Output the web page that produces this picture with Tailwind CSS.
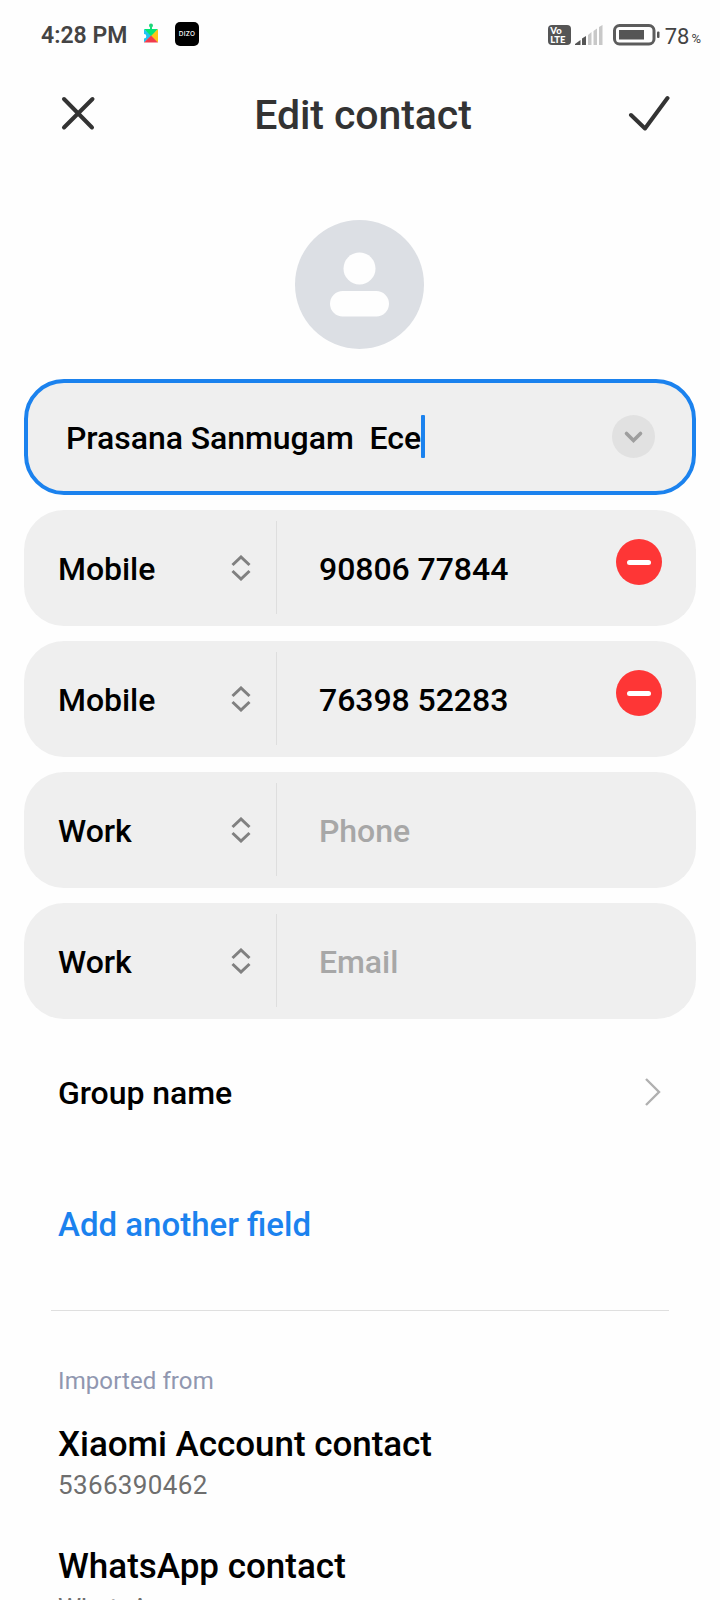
<!DOCTYPE html>
<html lang="en">
<head>
<meta charset="utf-8">
<title>Edit contact</title>
<script src="https://cdn.jsdelivr.net/npm/@tailwindcss/browser@4"></script>
</head>
<body class="bg-[#fefefe]">
<div class="w-[720px] h-[1600px] overflow-hidden flex flex-col font-['Roboto',sans-serif] text-black bg-[#fefefe]">

  <!-- Status bar -->
  <div class="h-[70px] shrink-0 flex items-center pl-[41px] pr-[19px] text-[#444]">
    <span class="text-[23px] leading-[30px] font-semibold w-[98px] whitespace-nowrap mt-[2px]">4:28 PM</span>
    <svg class="w-6 h-6 shrink-0 mb-[2px]" viewBox="0 0 24 24">
      <circle cx="12" cy="3.600" r="2" fill="#1fd67a"/><path d="M11 4h2v4h-2z" fill="#1fd67a"/>
      <path d="M5 7h14l-6 7h-2z" fill="#00e676"/>
      <path d="M5 7l7 7-7 6.500v-4a2.300 2.300 0 1 0 0-4.600z" fill="#22c3f3"/>
      <path d="M19 7v13.500l-7-6.500z" fill="#fdc516"/>
      <path d="M5 20.500h14l-7-7z" fill="#f03a4c"/>
    </svg>
    <div class="w-6 h-6 ml-3 mb-[2px] rounded-[5px] bg-black text-white flex items-center justify-center font-['Inter',sans-serif] text-[6.500px] leading-[8px] font-medium tracking-[0.300px]">DIZO</div>
    <div class="ml-auto flex items-center">
      <div class="w-[23px] h-5 rounded-[4px] bg-[#555] text-white font-['Lato',sans-serif] font-black text-[9.500px] leading-[9px] pl-[2.500px] pt-px">
        <div>Vo</div><div>LTE</div>
      </div>
      <svg class="w-7 h-5 ml-1" viewBox="0 0 28 20">
        <path d="M0 20v-1l5.500-4v5z" fill="#555"/><path d="M7 20v-6.500l4-2.500v9z" fill="#555"/>
        <path d="M13 20V10l3.500-3v13zM18.500 20V6L22 3.500V20zM24 20V2l3.500-2v20z" fill="#c8c8c8"/>
      </svg>
      <svg class="w-[47px] h-[22px] ml-[10px]" viewBox="0 0 47 22">
        <rect x="1.500" y="1.500" width="39.500" height="18.500" rx="5" fill="none" stroke="#5c5c5c" stroke-width="3"/>
        <rect x="6" y="6" width="25" height="9.500" fill="#555"/><rect x="44" y="7.500" width="2.500" height="6.500" rx="1" fill="#555"/>
      </svg>
      <span class="text-[22px] leading-[30px] ml-[5px] mt-[3px]">78</span><span class="text-[13px] mt-[7px] ml-[2px] font-[450]">%</span>
    </div>
  </div>

  <!-- Title bar -->
  <div class="h-[86px] shrink-0 flex items-center justify-between pl-[60px] pr-[50px] text-[#333]">
    <svg class="w-9 h-9" viewBox="0 0 36 36" fill="none" stroke="currentColor" stroke-width="4" stroke-linecap="round"><path d="M4 4l28 28.500M32.500 4L4 32.500"/></svg>
    <h1 class="text-[41px] leading-[50px] font-[480] whitespace-nowrap mt-[3px] ml-[2px] tracking-[-0.080px]">Edit contact</h1>
    <svg class="w-[42px] h-9" viewBox="0 0 42 36" fill="none" stroke="currentColor" stroke-width="4" stroke-linecap="round" stroke-linejoin="round"><path d="M3 20l14 13.500L39.500 3"/></svg>
  </div>

  <!-- Avatar -->
  <svg class="w-[129px] h-[129px] shrink-0 mt-16 ml-[295px]" viewBox="0 0 129 129">
    <circle cx="64.500" cy="64.500" r="64.500" fill="#dcdfe4"/>
    <circle cx="64.500" cy="48.500" r="16" fill="#fefefe"/><rect x="35" y="71" width="59" height="25.500" rx="12.750" fill="#fefefe"/>
  </svg>

  <!-- Fields -->
  <div class="mt-[30px] mx-6 flex flex-col gap-[15px] text-[32px] leading-[38px] font-[490] tracking-[-0.050px]">
    <div class="h-[116px] rounded-[40px] border-4 border-[#1b82ee] bg-[#efefef] flex items-center pl-[38px] pr-[37px]">
      <span class="whitespace-pre mt-px">Prasana Sanmugam  Ece</span>
      <span class="w-1 h-[43px] rounded-[1px] bg-[#1b82ee] mb-[2px]"></span>
      <svg class="w-[43px] h-[43px] ml-auto mb-[2px]" viewBox="0 0 43 43"><circle cx="21.500" cy="21.500" r="21.500" fill="#e1e1e1"/><path d="M14.500 18.500l7 7 7-7" fill="none" stroke="#9e9e9e" stroke-width="3.600" stroke-linecap="round"/></svg>
    </div>

    <div class="h-[116px] rounded-[40px] bg-[#efefef] flex items-center pl-[34px] pr-[34px]">
      <span class="w-[173px] mt-[2px]">Mobile</span>
      <svg class="w-[20px] h-[26px] mb-px" viewBox="0 0 20 26" fill="none" stroke="#808080" stroke-width="3"><path d="M1.500 10L10 2l8.500 8M1.500 16l8.500 8 8.500-8"/></svg>
      <span class="w-px h-[93px] bg-[#dedede] ml-[25px] mb-[2px]"></span>
      <span class="ml-[42px] mt-[2px]">90806 77844</span>
      <svg class="w-[46px] h-[46px] ml-auto mb-[12px]" viewBox="0 0 46 46"><circle cx="23" cy="23" r="23" fill="#fe3636"/><path d="M13.500 23.500h19" stroke="#fff" stroke-width="5" stroke-linecap="round"/></svg>
    </div>

    <div class="h-[116px] rounded-[40px] bg-[#efefef] flex items-center pl-[34px] pr-[34px]">
      <span class="w-[173px] mt-[2px]">Mobile</span>
      <svg class="w-[20px] h-[26px] mb-px" viewBox="0 0 20 26" fill="none" stroke="#808080" stroke-width="3"><path d="M1.500 10L10 2l8.500 8M1.500 16l8.500 8 8.500-8"/></svg>
      <span class="w-px h-[93px] bg-[#dedede] ml-[25px] mb-[2px]"></span>
      <span class="ml-[42px] mt-[2px]">76398 52283</span>
      <svg class="w-[46px] h-[46px] ml-auto mb-[12px]" viewBox="0 0 46 46"><circle cx="23" cy="23" r="23" fill="#fe3636"/><path d="M13.500 23.500h19" stroke="#fff" stroke-width="5" stroke-linecap="round"/></svg>
    </div>

    <div class="h-[116px] rounded-[40px] bg-[#efefef] flex items-center pl-[34px] pr-[34px]">
      <span class="w-[173px] mt-[2px]">Work</span>
      <svg class="w-[20px] h-[26px] mb-px" viewBox="0 0 20 26" fill="none" stroke="#808080" stroke-width="3"><path d="M1.500 10L10 2l8.500 8M1.500 16l8.500 8 8.500-8"/></svg>
      <span class="w-px h-[93px] bg-[#dedede] ml-[25px] mb-[2px]"></span>
      <span class="ml-[42px] mt-[2px] text-[#a7a7a7]">Phone</span>
    </div>

    <div class="h-[116px] rounded-[40px] bg-[#efefef] flex items-center pl-[34px] pr-[34px]">
      <span class="w-[173px] mt-[2px]">Work</span>
      <svg class="w-[20px] h-[26px] mb-px" viewBox="0 0 20 26" fill="none" stroke="#808080" stroke-width="3"><path d="M1.500 10L10 2l8.500 8M1.500 16l8.500 8 8.500-8"/></svg>
      <span class="w-px h-[93px] bg-[#dedede] ml-[25px] mb-[2px]"></span>
      <span class="ml-[42px] mt-[2px] text-[#a7a7a7]">Email</span>
    </div>

    <div class="h-[116px] flex items-center justify-between pl-[34px] pr-[35px]">
      <span class="mt-[2px]">Group name</span>
      <svg class="w-4 h-7" viewBox="0 0 16 28" fill="none" stroke="#b0b0b0" stroke-width="2.400"><path d="M1 1l13 13L1 27"/></svg>
    </div>

    <div class="h-[116px] flex items-center pl-[34px] text-[33px] font-medium tracking-normal text-[#1b82ee]">
      <span class="mt-[3px]">Add another field</span>
    </div>
  </div>

  <div class="h-px shrink-0 mt-[29px] ml-[51px] mr-[51px] bg-[#dfdfdf]"></div>

  <!-- Sources -->
  <div class="pl-[58px] pt-[54px] whitespace-nowrap">
    <p class="text-[24px] leading-8 text-[#9097b0] tracking-[0.100px]">Imported from</p>
    <p class="text-[35px] leading-[42px] font-[490] tracking-[-0.040px] mt-[27px]">Xiaomi Account contact</p>
    <p class="text-[26px] leading-8 text-[#6e6e6e] mt-[3px] tracking-[0.350px]">5366390462</p>
    <p class="text-[35px] leading-[42px] font-[490] mt-[45px]">WhatsApp contact</p>
    <p class="text-[26px] leading-8 text-[#6e6e6e] mt-[4px]">WhatsApp</p>
  </div>
</div>
</body>
</html>
